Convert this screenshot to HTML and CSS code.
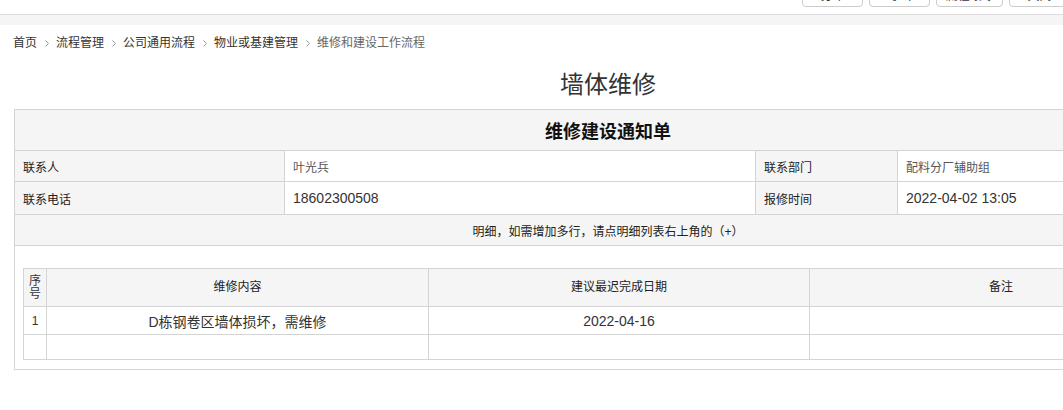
FILE: index.html
```html
<!DOCTYPE html>
<html lang="zh-CN">
<head>
    <meta charset="UTF-8">
    <title>墙体维修</title>
    <link rel="stylesheet" href="styles.css">
</head>
<body>

    <div class="page">
        <div class="toolbar">
            <a class="btn">打印</a>
            <a class="btn">导出</a>
            <a class="btn wide">流程跟踪</a>
            <a class="btn">关闭</a>
        </div>
        <div class="band"></div>

        <div class="main">
            <div class="crumbs">
                <a>首页</a>
                <svg class="sep" width="6" height="9" viewBox="0 0 6 9"><path d="M1.5 1.5l3 3-3 3" fill="none" stroke="#999" stroke-width="1"/></svg>
                <a>流程管理</a>
                <svg class="sep" width="6" height="9" viewBox="0 0 6 9"><path d="M1.5 1.5l3 3-3 3" fill="none" stroke="#999" stroke-width="1"/></svg>
                <a>公司通用流程</a>
                <svg class="sep" width="6" height="9" viewBox="0 0 6 9"><path d="M1.5 1.5l3 3-3 3" fill="none" stroke="#999" stroke-width="1"/></svg>
                <a>物业或基建管理</a>
                <svg class="sep" width="6" height="9" viewBox="0 0 6 9"><path d="M1.5 1.5l3 3-3 3" fill="none" stroke="#999" stroke-width="1"/></svg>
                <span class="last">维修和建设工作流程</span>
            </div>

            <h1 class="title">墙体维修</h1>

            <table class="form">
                <colgroup>
                    <col style="width:270px">
                    <col style="width:471px">
                    <col style="width:142px">
                    <col>
                </colgroup>
                <tr class="head">
                    <td colspan="4">维修建设通知单</td>
                </tr>
                <tr class="r1">
                    <td class="label">联系人</td>
                    <td class="value">叶光兵</td>
                    <td class="label">联系部门</td>
                    <td class="value">配料分厂辅助组</td>
                </tr>
                <tr class="r2">
                    <td class="label">联系电话</td>
                    <td class="value num">18602300508</td>
                    <td class="label">报修时间</td>
                    <td class="value num">2022-04-02 13:05</td>
                </tr>
                <tr class="note">
                    <td colspan="4">明细，如需增加多行，请点明细列表右上角的（+）</td>
                </tr>
                <tr>
                    <td colspan="4" class="wrap">
                        <table class="detail">
                            <colgroup>
                                <col style="width:23px">
                                <col style="width:382px">
                                <col style="width:381px">
                                <col>
                            </colgroup>
                            <tr class="dhead">
                                <td class="idx">序号</td>
                                <td>维修内容</td>
                                <td>建议最迟完成日期</td>
                                <td>备注</td>
                            </tr>
                            <tr class="drow">
                                <td class="idx">1</td>
                                <td class="big">D栋钢卷区墙体损坏，需维修</td>
                                <td class="big">2022-04-16</td>
                                <td></td>
                            </tr>
                            <tr class="dempty">
                                <td></td>
                                <td></td>
                                <td></td>
                                <td></td>
                            </tr>
                        </table>
                    </td>
                </tr>
            </table>
        </div>
    </div>

</body>
</html>
```

FILE: styles.css
```css
*{
    margin: 0;
    padding: 0;
    box-sizing: border-box;
}
html,body{
    overflow: hidden;
}
body{
    font-family: "Liberation Sans", "Noto Sans CJK SC", sans-serif;
    font-size: 12px;
    color: #333;
    background: #fff;
}
.page{
    width: 1216px;
}
.toolbar{
    display: flex;
    justify-content: flex-end;
    gap: 6px;
    height: 15px;
    padding-right: 146px;
    border-bottom: 1px solid #ddd;
}
.btn{
    display: block;
    width: 61px;
    height: 28px;
    margin-top: -21px;
    padding-top: 6px;
    line-height: 20px;
    text-align: center;
    font-size: 12px;
    color: #333;
    background: #fff;
    border: 1px solid #ccc;
    border-radius: 4px;
}
.btn.wide{
    width: 67px;
}
.band{
    height: 10px;
    background: #f5f5f5;
}
.crumbs{
    display: flex;
    align-items: center;
    padding: 8px 12px 0 13px;
    line-height: 20px;
    color: #333;
}
.crumbs .sep{
    margin: 0 6px 0 7px;
}
.crumbs .last{
    color: #666;
}
.title{
    margin-top: 14px;
    font-size: 24px;
    font-weight: normal;
    line-height: 36px;
    text-align: center;
    color: #333;
}
.form{
    width: 1188px;
    margin: 6px 14px 0;
    border-collapse: collapse;
    table-layout: fixed;
}
.form td{
    border: 1px solid #d4d4d4;
    padding: 0 8px;
}
.form .head td{
    height: 41px;
    background: #f5f5f5;
    text-align: center;
    font-size: 18px;
    font-weight: bold;
    color: #111;
}
.form .r1 td{
    height: 31px;
}
.form .r2 td{
    height: 33px;
}
.form .label{
    background: #f5f5f5;
    color: #222;
}
.form .value{
    color: #555;
}
.form .num{
    font-size: 14px;
    color: #333;
}
.form .note td{
    height: 31px;
    background: #f5f5f5;
    text-align: center;
    color: #222;
}
.form td.wrap{
    padding: 22px 8px 9px;
}
.detail{
    width: 100%;
    border-collapse: collapse;
    table-layout: fixed;
}
.detail td{
    padding: 0 2px;
    text-align: center;
    color: #222;
}
.detail .dhead td{
    height: 38px;
    background: #f5f5f5;
    line-height: 13px;
}
.detail .drow td{
    height: 28px;
}
.detail .dempty td{
    height: 25px;
}
.detail .idx{
    padding: 0 4px;
    color: #333;
}
.detail .big{
    font-size: 14px;
    color: #333;
}
```
